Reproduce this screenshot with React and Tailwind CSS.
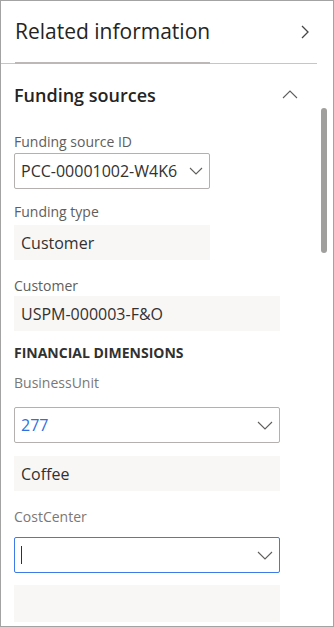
import React from 'react';

const font = { fontFamily: '"Open Sans", "Noto Sans", sans-serif' };

function ChevronDown({ w = 14, h = 7 }) {
  return (
    <svg width={w + 2} height={h + 2} viewBox={`0 0 ${w + 2} ${h + 2}`} fill="none">
      <path d={`M1 1 L${(w + 2) / 2} ${h + 1} L${w + 1} 1`} stroke="#605e5c" strokeWidth="1.1" />
    </svg>
  );
}

function Label({ children, light, className = '' }) {
  return (
    <div className={`h-5 text-[14px] leading-5 ${light ? 'text-[#7a7876]' : 'text-[#605e5c]'} ${className}`}>
      {children}
    </div>
  );
}

function ReadOnly({ value, wide, tall, className = '' }) {
  return (
    <div
      className={`${tall ? 'h-[37px]' : 'h-[35px]'} ${wide ? 'w-[266px]' : 'w-[196px]'} bg-[#f8f7f6] pl-[7px] flex items-center text-[16px] text-[#323130] ${className}`}
    >
      {value}
    </div>
  );
}

function Dropdown({ value, wide, blue, focused, small, className = '' }) {
  return (
    <div
      className={`h-9 ${wide ? 'w-[266px]' : 'w-[196px]'} rounded-[2px] border ${
        focused ? 'border-[#3f7be6]' : 'border-[#b3b0ad]'
      } bg-white pl-[6px] pr-[6px] flex items-center justify-between text-[16px] ${
        blue ? 'text-[#2f6fde]' : 'text-[#323130]'
      } ${className}`}
    >
      {focused ? <span className="w-px h-[18px] bg-[#323130]" /> : <span>{value}</span>}
      {small ? <ChevronDown w={12} h={6} /> : <ChevronDown w={14} h={7} />}
    </div>
  );
}

export default function App() {
  return (
    <div
      className="relative w-[334px] h-[627px] border border-[#a3a3a3] bg-white overflow-hidden"
      style={font}
    >
      {/* Header */}
      <div className="h-[61px] flex items-start justify-between pl-[14px] pr-[23px] pt-[16px]">
        <h1 className="text-[21px] leading-7 text-[#252423]">Related information</h1>
        <svg width="10" height="14" viewBox="0 0 10 14" fill="none" className="mt-[8px]">
          <path d="M2 1 L8 7 L2 13" stroke="#484644" strokeWidth="1.3" />
        </svg>
      </div>
      <div className="h-[2px] flex items-end mr-[16px]">
        <div className="w-[14px] h-px bg-[#c8c6c4]" />
        <div className="w-[195px] h-[2px] bg-[#bcb8b5]" />
        <div className="flex-1 h-px bg-[#c8c6c4]" />
      </div>

      {/* Scrollbar */}
      <div className="absolute left-[320px] top-[107px] w-[6px] h-[145px] rounded-full bg-[#a19f9d]" />

      {/* Section */}
      <div className="flex items-start justify-between pl-[13px] pr-[35px] pt-[19px]">
        <h2 className="text-[18px] leading-6 font-semibold text-[#252423]">Funding sources</h2>
        <svg width="16" height="10" viewBox="0 0 16 10" fill="none" className="mt-[6px]">
          <path d="M1 9 L8 2 L15 9" stroke="#605e5c" strokeWidth="1.1" />
        </svg>
      </div>

      <div className="pl-[13px] flex flex-col">
        <Label className="mt-[25px]">Funding source ID</Label>
        <Dropdown value="PCC-00001002-W4K6" small className="mt-[1px]" />

        <Label className="mt-[13px]">Funding type</Label>
        <ReadOnly value="Customer" className="mt-[3px]" />

        <Label className="mt-[16px]">Customer</Label>
        <ReadOnly value="USPM-000003-F&O" wide />

        <div className="mt-[12px] h-5 text-[14px] leading-5 font-bold text-[#323130]">
          FINANCIAL DIMENSIONS
        </div>

        <Label light className="mt-[10px]">BusinessUnit</Label>
        <Dropdown value="277" wide blue className="mt-[14px]" />
        <ReadOnly value="Coffee" wide className="mt-[13px]" />

        <Label light className="mt-[16px]">CostCenter</Label>
        <Dropdown wide focused className="mt-[10px]" />
        <ReadOnly value="" wide tall className="mt-[12px]" />
      </div>
    </div>
  );
}
